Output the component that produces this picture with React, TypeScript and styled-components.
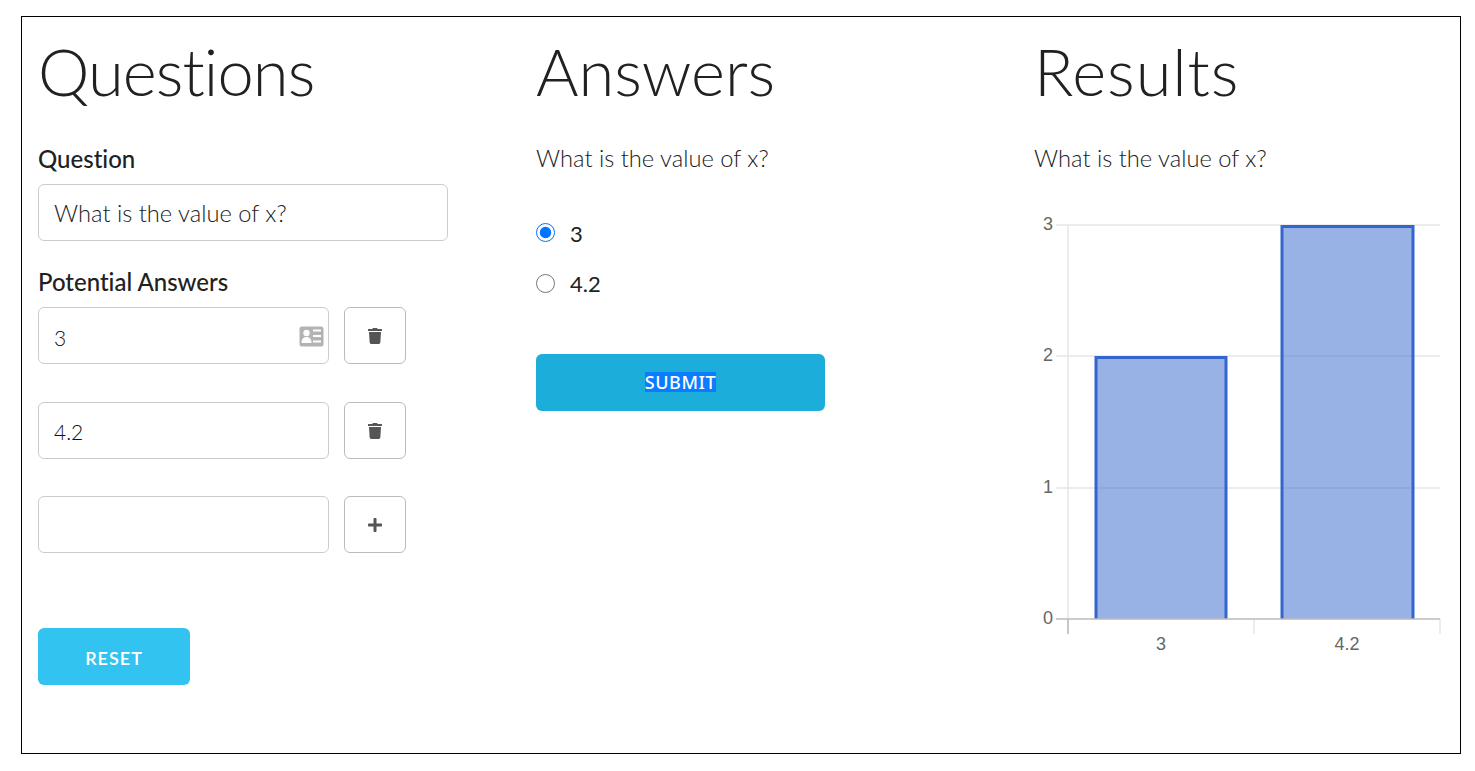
import styled, { createGlobalStyle } from "styled-components";
import { FaPlus, FaTrash } from "react-icons/fa";

const GlobalStyle = createGlobalStyle`
  * {
    box-sizing: border-box;
  }

  body {
    margin: 0;
    background: #fff;
    color: #212121;
    font-family: "Lato", "Liberation Sans", sans-serif;
    font-variant-ligatures: none;
  }

  input, button {
    font-variant-ligatures: none;
  }
`;

const Frame = styled.div`
  display: grid;
  grid-template-columns: repeat(3, 498px);
  width: 1440px;
  height: 738px;
  margin: 16px 0 0 21px;
  border: 1px solid #000;
`;

const Column = styled.section`
  display: flex;
  flex-direction: column;
  align-items: flex-start;
  padding: 15px 16px 0;
`;

const Title = styled.h1<{ $spacing?: number }>`
  margin: 0 0 33px;
  height: 80px;
  font-size: 65px;
  line-height: 78px;
  font-weight: 300;
  letter-spacing: ${(p) => p.$spacing ?? 0}px;
  color: #212121;
`;

const Label = styled.label`
  display: block;
  height: 28px;
  margin-bottom: 11px;
  font-size: 24px;
  line-height: 28px;
  font-weight: 500;
`;

const Prompt = styled.p`
  margin: 0;
  height: 28px;
  font-size: 23.7px;
  line-height: 26px;
  font-weight: 300;
`;

const InputWrap = styled.div<{ $width: number; $gap?: number }>`
  position: relative;
  width: ${(p) => p.$width}px;
  margin-bottom: ${(p) => p.$gap ?? 0}px;
`;

const TextInput = styled.input<{ $numeric?: boolean; $drop?: number }>`
  display: block;
  width: 100%;
  height: 57px;
  padding: ${(p) => p.$drop ?? 0}px 15px 0;
  border: 1px solid #ccc;
  border-radius: 6px;
  background: #fff;
  color: ${(p) => (p.$numeric ? "#111" : "#212121")};
  font-family: inherit;
  font-size: ${(p) => (p.$numeric ? "21px" : "23.7px")};
  font-weight: 300;
  outline: none;
`;

const CardIcon = styled.svg`
  position: absolute;
  top: 19px;
  right: 5px;
  width: 25px;
  height: 21px;
`;

const AnswerRow = styled.div<{ $gap: number }>`
  display: flex;
  gap: 15px;
  margin-bottom: ${(p) => p.$gap}px;
`;

const IconButton = styled.button`
  display: flex;
  align-items: center;
  justify-content: center;
  width: 62px;
  height: 57px;
  padding: 0;
  border: 1px solid #bbb;
  border-radius: 6px;
  background: #fff;
  color: #555;
  font-size: 16px;
`;

const ResetButton = styled.button`
  width: 152px;
  height: 57px;
  margin-top: 38px;
  padding: 2px 0 0;
  border: 0;
  border-radius: 6px;
  background: #33c3f0;
  color: #fff;
  font-family: inherit;
  font-size: 18px;
  font-weight: 600;
  letter-spacing: 1px;
`;

const Options = styled.div`
  display: flex;
  flex-direction: column;
  gap: 29px;
  margin: 48px 0 60px;
`;

const Option = styled.label`
  display: flex;
  align-items: center;
  gap: 15px;
  height: 22px;
  font-size: 22px;
  font-weight: 400;
`;

const OptionText = styled.span<{ $drop?: number }>`
  padding-top: ${(p) => p.$drop ?? 0}px;
`;

const Radio = styled.input`
  width: 19px;
  height: 19px;
  margin: 0;
`;

const SubmitButton = styled.button`
  width: 289px;
  height: 57px;
  padding: 0 0 2px;
  border: 0;
  border-radius: 6px;
  background: #1cadda;
  color: #fff;
  font-family: "Noto Sans", "Liberation Sans", sans-serif;
  font-size: 18px;
  font-weight: 500;
  letter-spacing: 0.6px;
`;

const Selected = styled.span`
  display: inline-block;
  height: 20px;
  line-height: 20px;
  background: #0a7cff;
`;

const Chart = styled.svg`
  display: block;
  margin-top: 37px;
  overflow: visible;
`;

const AxisText = styled.text`
  font-family: "Liberation Sans", Arial, sans-serif;
  font-size: 18px;
  fill: #666;
`;

// page y = svg y + 210, page x = svg x + 1034
const ticks = [
  { label: "3", y: 15 },
  { label: "2", y: 146 },
  { label: "1", y: 278 },
];

const baseline = 409;

const bars = [
  { x: 62, y: 147.5, width: 130 },
  { x: 248, y: 16.5, width: 131 },
];

function ResultsChart() {
  return (
    <Chart width="410" height="450" viewBox="0 0 410 450">
      {ticks.map((t) => (
        <line key={t.label} x1="22" x2="406" y1={t.y} y2={t.y} stroke="#e6e6e6" strokeWidth="1.5" />
      ))}
      <line x1="34" x2="34" y1="15" y2="424" stroke="#e6e6e6" strokeWidth="1.5" />
      <line x1="220" x2="220" y1="409" y2="424" stroke="#e6e6e6" strokeWidth="1.5" />
      <line x1="406" x2="406" y1="409" y2="424" stroke="#e6e6e6" strokeWidth="1.5" />
      <line x1="34" x2="34" y1="409" y2="424" stroke="#bbb" strokeWidth="1.5" />
      {bars.map((b) => (
        <path
          key={b.x}
          d={`M${b.x} ${baseline}V${b.y}H${b.x + b.width}V${baseline}`}
          fill="rgba(51,102,204,0.5)"
          stroke="#3366cc"
          strokeWidth="3"
        />
      ))}
      <line x1="22" x2="406" y1={baseline} y2={baseline} stroke="#bbb" strokeWidth="1.5" />
      {ticks.map((t) => (
        <AxisText key={t.label} x="19" y={t.y + 5} textAnchor="end">
          {t.label}
        </AxisText>
      ))}
      <AxisText x="19" y="414" textAnchor="end">
        0
      </AxisText>
      <AxisText x="127" y="439.5" textAnchor="middle">
        3
      </AxisText>
      <AxisText x="313" y="439.5" textAnchor="middle">
        4.2
      </AxisText>
    </Chart>
  );
}

function ContactCard() {
  return (
    <CardIcon viewBox="0 0 25 21">
      <rect x="0.5" y="0.5" width="24" height="20" rx="2.5" fill="#b3b3b3" />
      <circle cx="7.5" cy="7" r="3.2" fill="#fff" />
      <path d="M2.5 17c0-4 2-6 5-6s5 2 5 6z" fill="#fff" />
      <path d="M14 4.5h8M14 10h8M14 15.5h8" stroke="#fff" strokeWidth="2" />
    </CardIcon>
  );
}

export default function App() {
  return (
    <>
      <GlobalStyle />
      <Frame>
        <Column>
          <Title $spacing={-0.9}>Questions</Title>
          <Label>Question</Label>
          <InputWrap $width={410} $gap={27}>
            <TextInput defaultValue="What is the value of x?" />
          </InputWrap>
          <Label>Potential Answers</Label>
          <AnswerRow $gap={38}>
            <InputWrap $width={291}>
              <TextInput $numeric $drop={3} defaultValue="3" />
              <ContactCard />
            </InputWrap>
            <IconButton>
              <FaTrash />
            </IconButton>
          </AnswerRow>
          <AnswerRow $gap={37}>
            <InputWrap $width={291}>
              <TextInput $numeric $drop={1} defaultValue="4.2" />
            </InputWrap>
            <IconButton>
              <FaTrash />
            </IconButton>
          </AnswerRow>
          <AnswerRow $gap={37}>
            <InputWrap $width={291}>
              <TextInput />
            </InputWrap>
            <IconButton>
              <FaPlus />
            </IconButton>
          </AnswerRow>
          <ResetButton>RESET</ResetButton>
        </Column>
        <Column>
          <Title>Answers</Title>
          <Prompt>What is the value of x?</Prompt>
          <Options>
            <Option>
              <Radio type="radio" name="answer" defaultChecked />
              <OptionText $drop={3}>3</OptionText>
            </Option>
            <Option>
              <Radio type="radio" name="answer" />
              <OptionText>4.2</OptionText>
            </Option>
          </Options>
          <SubmitButton>
            <Selected>SUBMIT</Selected>
          </SubmitButton>
        </Column>
        <Column>
          <Title $spacing={0.9}>Results</Title>
          <Prompt>What is the value of x?</Prompt>
          <ResultsChart />
        </Column>
      </Frame>
    </>
  );
}
